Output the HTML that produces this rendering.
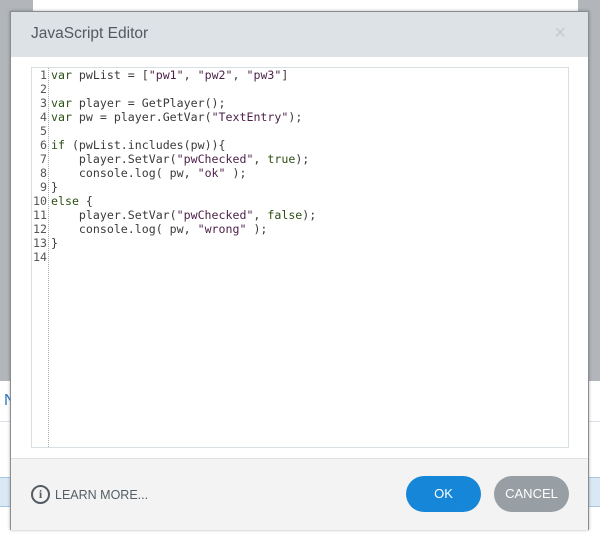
<!DOCTYPE html>
<html><head><style>
*{margin:0;padding:0;box-sizing:border-box}
body{width:600px;height:540px;position:relative;overflow:hidden;background:#fff;font-family:"Liberation Sans",sans-serif}
.ov{position:absolute;left:0;top:0;width:600px;height:381px;background:#b2b6ba}
.wb{position:absolute;left:33px;top:0;width:545px;height:11px;background:#fff}
.dlg{position:absolute;left:10px;top:11px;width:579px;height:519px;background:#fff;border:1px solid #8a8d90;box-shadow:0 0 3px rgba(0,0,0,.3)}
.hd{height:45px;background:#dde2e6;color:#505a62;font-size:15.5px;padding:13px 0 0 20px}
.x{position:absolute;right:22px;top:10px;color:#c4c9cd;font-size:20px}
.ed{position:absolute;left:20px;top:55px;width:538px;height:381px;border:1px solid #d8dfe3}
.gut{position:absolute;left:0;top:0;width:17px;height:100%;border-right:1px dotted #aaa}
pre{position:absolute;top:0;font-family:"DejaVu Sans Mono","Liberation Mono",monospace;font-size:11.6px;line-height:14px;color:#3a3a3a}
.ln{left:0;width:15px;text-align:right;color:#555}
.cd{left:19px}
.k{color:#2d5016}.s{color:#4b1f48}
.ft{position:absolute;left:0;top:446px;width:100%;height:72px;background:#f3f3f3;border-top:1px solid #dde1e4}
.lm{position:absolute;left:20px;top:26px;color:#545d63;font-size:12.5px;display:flex;align-items:center;gap:5px}
.ic{width:19px;height:19px;border:2px solid #545d63;border-radius:50%;text-align:center;font:bold 12px/15px "Liberation Serif",serif}
.b{position:absolute;top:17px;width:75px;height:36px;border-radius:18px;color:#fff;font-size:13px;text-align:center;line-height:36px}
</style></head><body>
<div class="ov"></div><div class="wb"></div>
<div style="position:absolute;left:4px;top:392px;color:#2a78c0;font-size:16px">N</div>
<div style="position:absolute;left:0;top:421px;width:600px;height:1px;background:#dde"></div>
<div style="position:absolute;left:0;top:477px;width:600px;height:30px;background:#dae8f5;border-top:1px solid #a9c8e6;border-bottom:1px solid #a9c8e6"></div>
<div class="dlg">
<div class="hd">JavaScript Editor</div><div class="x">×</div>
<div class="ed"><div class="gut"></div>
<pre class="ln">1
2
3
4
5
6
7
8
9
10
11
12
13
14</pre>
<pre class="cd"><span class="k">var</span> pwList = [<span class="s">"pw1"</span>, <span class="s">"pw2"</span>, <span class="s">"pw3"</span>]

<span class="k">var</span> player = GetPlayer();
<span class="k">var</span> pw = player.GetVar(<span class="s">"TextEntry"</span>);

<span class="k">if</span> (pwList.includes(pw)){
    player.SetVar(<span class="s">"pwChecked"</span>, <span class="k">true</span>);
    console.log( pw, <span class="s">"ok"</span> );
}
<span class="k">else</span> {
    player.SetVar(<span class="s">"pwChecked"</span>, <span class="k">false</span>);
    console.log( pw, <span class="s">"wrong"</span> );
}
</pre></div>
<div class="ft">
<div class="lm"><div class="ic">i</div>LEARN MORE...</div>
<div class="b" style="left:395px;background:#1686d8">OK</div>
<div class="b" style="left:483px;background:#979ea4">CANCEL</div>
</div></div>
</body></html>
